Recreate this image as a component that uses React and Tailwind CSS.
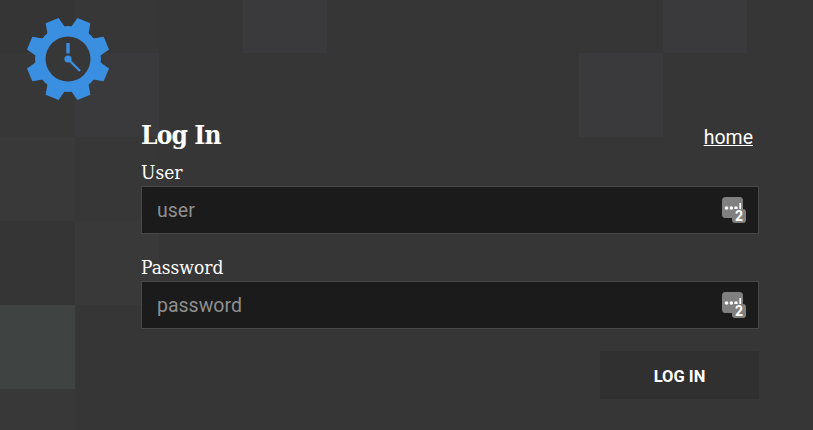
import React from 'react';

// tile shades for the faint checker behind the page: 10 columns x 6 rows
const B = '#363636';
const L = '#3a3a3c';
const tiles = [
  ['#353535', '#373737', B, L, B, B, B, B, L, B],
  ['#373737', L, B, B, B, B, B, L, B, B],
  ['#393939', '#373737', B, B, B, B, B, B, B, B],
  ['#353535', '#39393a', B, B, B, B, B, B, B, B],
  ['#3f4443', B, B, B, B, B, B, B, B, B],
  ['#383838', B, B, B, B, B, B, B, B, B],
];

function GearClock() {
  const teeth = [0, 45, 90, 135, 180, 225, 270, 315];
  return (
    <svg width="84" height="84" viewBox="0 0 84 84" className="block overflow-visible">
      <g fill="#3b8fe0">
        {teeth.map(a => (
          <path key={a} d="M35 0.5 L49 0.5 L52 14 L32 14 Z" transform={`rotate(${a + 22.5} 42 42)`} />
        ))}
      </g>
      <circle cx="42" cy="42" r="33" fill="#3b8fe0" />
      <circle cx="42" cy="42" r="22.5" fill="#373737" />
      <path d="M42 26 V36.5" stroke="#3b8fe0" strokeWidth="3.4" fill="none" />
      <path d="M42 42 L54 54" stroke="#3b8fe0" strokeWidth="2.4" fill="none" />
      <circle cx="42" cy="42" r="3.6" fill="#3b8fe0" />
    </svg>
  );
}

function PassIcon() {
  return (
    <svg width="24" height="26" viewBox="0 0 24 26" className="block overflow-visible">
      <rect x="0" y="0" width="21" height="21" rx="3.5" fill="#808080" />
      <circle cx="4.5" cy="11" r="1.8" fill="#fff" />
      <circle cx="9.3" cy="11" r="1.8" fill="#fff" />
      <circle cx="14" cy="11" r="1.8" fill="#fff" />
      <rect x="17.4" y="6" width="1.7" height="7" fill="#fff" />
      <rect x="10" y="12" width="14" height="14" rx="3" fill="#808080" />
      <text x="17" y="24" textAnchor="middle" fill="#fff" fontSize="14" fontWeight="700" fontFamily="Roboto, sans-serif">2</text>
    </svg>
  );
}

function Field({ label, placeholder, type }) {
  return (
    <div className="flex flex-col">
      <label className="text-[19px] leading-[26px] text-white font-['DejaVu_Serif_Condensed','DejaVu_Serif',serif] h-[27px]">{label}</label>
      <div className="relative h-[48px] bg-[#1b1b1b] border border-[#484848] flex items-center">
        <input
          type={type}
          placeholder={placeholder}
          className="w-full h-full bg-transparent pl-[15px] pr-[50px] text-[19.5px] font-['Roboto',sans-serif] text-white placeholder:text-[#8f8f8f] outline-none"
        />
        <div className="absolute left-[580px] top-[10px]">
          <PassIcon />
        </div>
      </div>
    </div>
  );
}

export default function App() {
  return (
    <div className="relative w-full h-[430px] overflow-hidden bg-[#363636] font-['Roboto',sans-serif]">
      {/* faint tiles, sits behind everything */}
      <div className="absolute left-[-9px] top-[-31px] grid grid-cols-[repeat(10,84px)] auto-rows-[84px]">
        {tiles.flat().map((c, i) => (
          <div key={i} style={{ backgroundColor: c }} />
        ))}
      </div>

      <div className="relative flex flex-col h-full pl-[26px]">
        <div className="h-[100px] w-[84px] pt-[17px]">
          <GearClock />
        </div>
        <div className="w-[618px] ml-[115px] mt-[17px] flex flex-col">
          <div className="flex items-start justify-between h-[42px] pr-[6px]">
            <h1 className="text-[26px] leading-[36px] font-bold text-white font-['DejaVu_Serif_Condensed','DejaVu_Serif',serif] tracking-[-0.8px]">Log In</h1>
            <a href="#" className="text-[19.5px] leading-[42px] h-[38px] text-white underline font-['Roboto',sans-serif]">home</a>
          </div>
          <div className="flex flex-col gap-[20px]">
            <Field label="User" placeholder="user" type="text" />
            <Field label="Password" placeholder="password" type="password" />
          </div>
          <div className="flex justify-end mt-[22px]">
            <button className="w-[159px] h-[48px] pt-[4px] bg-[#303030] text-white text-[16.5px] font-bold font-['Roboto',sans-serif]">LOG IN</button>
          </div>
        </div>
      </div>
    </div>
  );
}
